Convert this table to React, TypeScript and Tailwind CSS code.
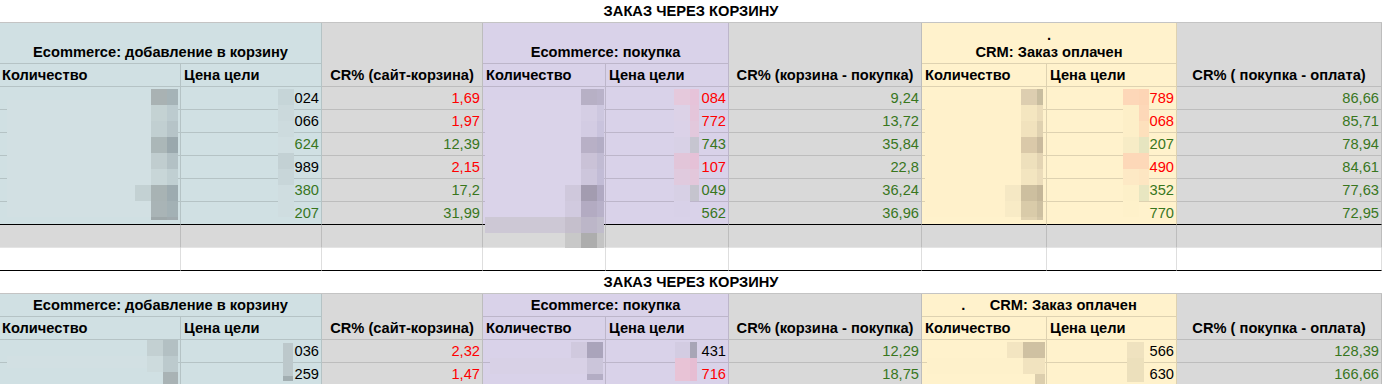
import React from "react";

const GRID =
  "grid grid-cols-[181px_141px_161px_123px_123px_193px_125px_130px_205px]";
const BLUE = "bg-[#d0e0e3]";
const GRAY = "bg-[#d9d9d9]";
const PURP = "bg-[#d9d2e9]";
const YEL = "bg-[#fff2cc]";
const LR = "border-r border-r-[rgba(0,0,0,0.13)]";
const LB = "border-b border-b-[rgba(0,0,0,0.13)]";
const LBK = "border-b border-b-black";

const RED = "text-[#ff0000]";
const GRN = "text-[#38761d]";
const BLK = "text-black";

type V = [string, string];
type Row = { b: V; c: V; e: V; f: V; h: V; i: V };

const rows1: Row[] = [
  { b: ["024", BLK], c: ["1,69", RED], e: ["084", RED], f: ["9,24", GRN], h: ["789", RED], i: ["86,66", GRN] },
  { b: ["066", BLK], c: ["1,97", RED], e: ["772", RED], f: ["13,72", GRN], h: ["068", RED], i: ["85,71", GRN] },
  { b: ["624", GRN], c: ["12,39", GRN], e: ["743", GRN], f: ["35,84", GRN], h: ["207", GRN], i: ["78,94", GRN] },
  { b: ["989", BLK], c: ["2,15", RED], e: ["107", RED], f: ["22,8", GRN], h: ["490", RED], i: ["84,61", GRN] },
  { b: ["380", GRN], c: ["17,2", GRN], e: ["049", GRN], f: ["36,24", GRN], h: ["352", GRN], i: ["77,63", GRN] },
  { b: ["207", GRN], c: ["31,99", GRN], e: ["562", GRN], f: ["36,96", GRN], h: ["770", GRN], i: ["72,95", GRN] },
];

const rows2: Row[] = [
  { b: ["036", BLK], c: ["2,32", RED], e: ["431", BLK], f: ["12,29", GRN], h: ["566", BLK], i: ["128,39", GRN] },
  { b: ["259", BLK], c: ["1,47", RED], e: ["716", RED], f: ["18,75", GRN], h: ["630", BLK], i: ["166,66", GRN] },
];

function Num({ bg, v, last }: { bg: string; v: V; last: boolean }) {
  return (
    <div
      className={`${bg} ${LR} ${last ? LBK : LB} flex items-end justify-end pr-[2px] pb-[2px]`}
    >
      <span className={v[1]}>{v[0]}</span>
    </div>
  );
}

function Blank({ bg, last, pad }: { bg: string; last: boolean; pad?: boolean }) {
  return <div className={`${bg} ${LR} ${last ? LBK : LB} ${pad ? "" : ""}`} />;
}

function DataRow({ r, last }: { r: Row; last: boolean }) {
  return (
    <>
      <Blank bg={BLUE} last={last} />
      <Num bg={BLUE} v={r.b} last={last} />
      <Num bg={GRAY} v={r.c} last={last} />
      <Blank bg={PURP} last={last} />
      <Num bg={PURP} v={r.e} last={last} />
      <Num bg={GRAY} v={r.f} last={last} />
      <Blank bg={YEL} last={last} />
      <Num bg={YEL} v={r.h} last={last} />
      <Num bg={GRAY} v={r.i} last={last} />
    </>
  );
}

function Title() {
  return (
    <div className="col-span-9 flex items-end justify-center pb-[2px] font-bold border-b border-b-[#c4c4c4] bg-white">
      ЗАКАЗ ЧЕРЕЗ КОРЗИНУ
    </div>
  );
}

function SubHeaders() {
  return (
    <>
      <div className={`${BLUE} ${LR} ${LB} flex items-end pl-[2px] pb-[2px] font-bold`}>Количество</div>
      <div className={`${BLUE} ${LR} ${LB} flex items-end pl-[3px] pb-[2px] font-bold`}>Цена цели</div>
      <div className={`${PURP} ${LR} ${LB} flex items-end pl-[3px] pb-[2px] font-bold`}>Количество</div>
      <div className={`${PURP} ${LR} ${LB} flex items-end pl-[3px] pb-[2px] font-bold`}>Цена цели</div>
      <div className={`${YEL} ${LR} ${LB} flex items-end pl-[3px] pb-[2px] font-bold`}>Количество</div>
      <div className={`${YEL} ${LR} ${LB} flex items-end pl-[3px] pb-[2px] font-bold`}>Цена цели</div>
    </>
  );
}

function Headers({ first }: { first: boolean }) {
  const hc = "flex items-end justify-center text-center pb-[2px] font-bold";
  return (
    <>
      <div className={`col-span-2 ${BLUE} ${LR} ${LB} ${hc}`}>Ecommerce: добавление в корзину</div>
      <div className={`row-span-2 ${GRAY} ${LR} ${LB} ${hc}`}>CR% (сайт-корзина)</div>
      <div className={`col-span-2 ${PURP} ${LR} ${LB} ${hc}`}>Ecommerce: покупка</div>
      <div className={`row-span-2 ${GRAY} ${LR} ${LB} ${hc}`}>CR% (корзина - покупка)</div>
      {first ? (
        <div className={`col-span-2 ${YEL} ${LR} ${LB} ${hc}`}>
          <span>
            .
            <br />
            CRM: Заказ оплачен
          </span>
        </div>
      ) : (
        <div className={`col-span-2 ${YEL} ${LR} ${LB} ${hc} whitespace-pre`}>
          {".      CRM: Заказ оплачен"}
        </div>
      )}
      <div className={`row-span-2 ${GRAY} ${LR} ${LB} ${hc}`}>CR% ( покупка - оплата)</div>
      <SubHeaders />
    </>
  );
}

// redaction mosaic blocks: [x, y, w, h, color]
const blocks: [number, number, number, number, string][] = [
  // section 1, column A
  [7, 100, 144, 117, "#d2e0e3"],
  [151, 89, 16, 16, "#a9b2b3"], [167, 89, 11, 16, "#a5b3b7"],
  [151, 105, 16, 16, "#c4d2d3"], [167, 105, 11, 16, "#bccbcf"],
  [151, 121, 16, 16, "#c1cfd1"], [167, 121, 11, 16, "#b6c4c8"],
  [151, 137, 16, 16, "#abb7b8"], [167, 137, 11, 16, "#9aa8ad"],
  [151, 153, 16, 16, "#c0cdcf"], [167, 153, 11, 16, "#b3c1c5"],
  [151, 169, 16, 16, "#c8d6d8"], [167, 169, 11, 16, "#c0cfd2"],
  [135, 185, 16, 16, "#c3d1d3"], [151, 185, 16, 16, "#a8b3b4"], [167, 185, 11, 16, "#9dabb0"],
  [151, 201, 16, 16, "#a9b4b6"], [167, 201, 11, 16, "#a3b1b5"],
  [151, 217, 16, 3, "#9ea8aa"], [167, 217, 11, 3, "#a0aaae"],
  // column B
  [278, 89, 16, 16, "#c6d5d8"], [278, 105, 16, 16, "#cbd9dc"], [278, 121, 16, 16, "#cddbde"],
  [278, 137, 16, 16, "#d0dee1"], [278, 153, 16, 16, "#c3d1d4"], [278, 169, 16, 16, "#c8d6d9"],
  [278, 185, 16, 32, "#cfdde0"],
  // column D
  [485, 100, 96, 117, "#dad3e9"],
  [581, 89, 16, 16, "#b7b0c5"], [597, 89, 7, 16, "#b9b2c9"],
  [581, 105, 16, 16, "#d5cee4"], [597, 105, 7, 16, "#cdc7df"],
  [581, 121, 16, 16, "#d3cce3"], [597, 121, 7, 16, "#c9c3dd"],
  [581, 137, 16, 16, "#b8b0c6"], [597, 137, 7, 16, "#b3adc5"],
  [581, 153, 16, 16, "#cac2d7"], [597, 153, 7, 16, "#c1bbd3"],
  [581, 169, 16, 16, "#cdc6dc"], [597, 169, 7, 16, "#c2bcd6"],
  [565, 185, 16, 16, "#cfc8dc"], [581, 185, 16, 16, "#a39cb0"], [597, 185, 7, 16, "#b0a9c2"],
  [565, 201, 16, 16, "#d1cadf"], [581, 201, 16, 16, "#b3abc2"], [597, 201, 7, 16, "#b8b1c9"],
  [485, 217, 80, 16, "#cdc8d5"], [565, 217, 16, 16, "#c5bfcc"], [581, 217, 16, 16, "#bcb6c8"], [597, 217, 7, 16, "#c0bccb"],
  [565, 233, 16, 15, "#c8c8c8"], [581, 233, 16, 15, "#adadad"], [597, 233, 7, 15, "#c4c4c4"],
  // column E
  [674, 89, 16, 16, "#e5c9dc"], [690, 89, 9, 16, "#e6c3d9"],
  [674, 105, 16, 16, "#dcd2e7"], [690, 105, 9, 16, "#e4c5da"],
  [674, 121, 16, 16, "#dbd2e8"], [690, 121, 9, 16, "#e2c8dc"],
  [674, 137, 16, 16, "#d8d1e6"], [690, 137, 9, 16, "#c6c5d0"],
  [674, 153, 16, 16, "#e2c5d9"], [690, 153, 9, 16, "#e5c1d7"],
  [674, 169, 16, 16, "#e0cade"], [690, 169, 9, 16, "#e3c7db"],
  [674, 185, 16, 16, "#d7d0e5"], [690, 185, 9, 16, "#c5c4ce"],
  [674, 201, 16, 16, "#d8d1e8"],
  // column G
  [925, 100, 96, 117, "#fff1cb"],
  [1021, 89, 16, 16, "#ddceb0"], [1037, 89, 6, 16, "#c8bd9f"],
  [1021, 105, 16, 16, "#f4e6c0"], [1037, 105, 6, 16, "#ebdcb9"],
  [1021, 121, 16, 16, "#f1e2bd"], [1037, 121, 6, 16, "#dfd1b0"],
  [1021, 137, 16, 16, "#dac9a9"], [1037, 137, 6, 16, "#c9ba9d"],
  [1021, 153, 16, 16, "#eee0bc"], [1037, 153, 6, 16, "#e3d4b3"],
  [1021, 169, 16, 16, "#f3e5c0"], [1037, 169, 6, 16, "#ebdcba"],
  [1005, 185, 16, 16, "#f5e8c4"], [1021, 185, 16, 16, "#cdbf9f"], [1037, 185, 6, 16, "#c4b698"],
  [1005, 201, 16, 16, "#f8ebc6"], [1021, 201, 16, 16, "#d9cba9"], [1037, 201, 6, 16, "#cdc0a1"],
  [1021, 217, 16, 3, "#e0d2b0"], [1037, 217, 6, 3, "#d3c6a7"],
  // column H
  [1123, 89, 16, 16, "#fdd7b8"], [1139, 89, 10, 16, "#fdd5b5"],
  [1123, 105, 16, 16, "#fdefc8"], [1139, 105, 10, 16, "#fdd8b8"],
  [1123, 121, 16, 16, "#fdefc8"], [1139, 121, 10, 16, "#fde0bc"],
  [1123, 137, 16, 16, "#f7ecc6"], [1139, 137, 10, 16, "#e6e5c0"],
  [1123, 153, 16, 16, "#fdd8b8"], [1139, 153, 10, 16, "#fdd8b8"],
  [1123, 169, 16, 16, "#fde9c5"], [1139, 169, 10, 16, "#fde6c2"],
  [1123, 185, 16, 16, "#fdf0c9"], [1139, 185, 10, 16, "#e8e6c1"],
  [1123, 201, 16, 16, "#fef1ca"],
  // section 2
  [7, 356, 140, 12, "#d2e0e3"],
  [147, 340, 16, 16, "#c3d0d2"], [163, 340, 15, 16, "#b3c0c3"],
  [147, 356, 16, 16, "#cddbdd"], [163, 356, 15, 16, "#bccacd"],
  [163, 372, 15, 12, "#a9b3b5"],
  [283, 343, 10, 33, "#bcc8cb"], [283, 376, 10, 5, "#a2aeb1"],
  [490, 358, 97, 16, "#d8d1e6"],
  [571, 342, 16, 16, "#d0c9de"], [587, 342, 16, 16, "#aaa4bb"],
  [587, 358, 16, 16, "#cbc5da"], [587, 374, 16, 6, "#b3adc4"],
  [675, 342, 15, 16, "#d3cce2"], [690, 342, 7, 16, "#a8a5b6"],
  [675, 358, 15, 23, "#e8c3d6"], [690, 358, 7, 23, "#e6bdd3"],
  [927, 358, 96, 16, "#fef1cb"],
  [1007, 342, 16, 16, "#f3e5c1"], [1023, 342, 22, 16, "#cfc1a2"],
  [1023, 358, 22, 16, "#f1e3bf"], [1035, 374, 10, 10, "#dccead"],
  [1127, 342, 17, 16, "#efe2bf"], [1127, 358, 17, 24, "#ece0bc"],
];

export default function App() {
  return (
    <div className="relative w-[1382px] h-[384px] overflow-hidden bg-white font-['Liberation_Sans',Arial,sans-serif] text-[14.67px] leading-[17px] text-black">
      {/* Section 1 */}
      <div className={`${GRID} grid-rows-[23px_41px_23px_23px_23px_23px_23px_23px_23px_23px_23px]`}>
        <Title />
        <Headers first={true} />
        {rows1.map((r, i) => (
          <DataRow key={i} r={r} last={i === rows1.length - 1} />
        ))}
        {/* gray empty row */}
        {[0, 1, 2, 3, 4, 5, 6, 7, 8].map((k) => (
          <div key={`g${k}`} className={`${GRAY} ${LR} border-b border-b-[#e4e4e4]`} />
        ))}
        {/* white empty row */}
        {[0, 1, 2, 3, 4, 5, 6, 7, 8].map((k) => (
          <div key={`w${k}`} className={`bg-white ${LR} ${LBK}`} />
        ))}
      </div>
      {/* Section 2 */}
      <div className={`${GRID} grid-rows-[23px_23px_23px_23px_23px]`}>
        <Title />
        <Headers first={false} />
        {rows2.map((r, i) => (
          <DataRow key={i} r={r} last={false} />
        ))}
      </div>
      {/* redaction mosaic overlay */}
      <div className="pointer-events-none absolute inset-0">
        {blocks.map(([x, y, w, h, c], i) => (
          <div
            key={i}
            className="absolute"
            style={{ left: x, top: y, width: w, height: h, background: c }}
          />
        ))}
      </div>
    </div>
  );
}
